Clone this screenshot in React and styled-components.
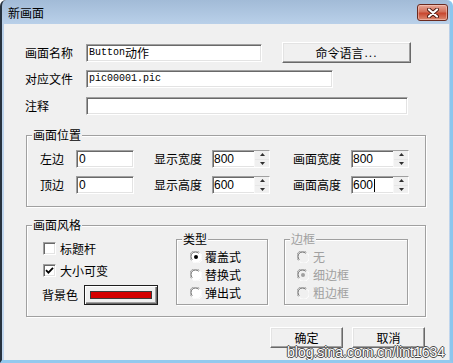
import React from "react";
import styled, { createGlobalStyle } from "styled-components";

const GlobalStyle = createGlobalStyle`
  html, body { margin: 0; padding: 0; background: #ffffff; }
  body { font-family: "Noto Sans CJK SC", "Liberation Sans", sans-serif; font-size: 12px; }
  * { box-sizing: border-box; }
`;

const Window = styled.div`
  position: relative;
  width: 453px;
  height: 363px;
  display: flex;
  flex-direction: column;
  background: linear-gradient(#a2bbd7, #b9d0e9 24px, #c2d7ee);
  border-left: 2px solid #27323e;
  border-right: 3px solid #8cc6ee;
  border-bottom: 3px solid #93c9ee;
  border-top-left-radius: 6px;
  border-top-right-radius: 6px;
  overflow: hidden;
`;

const TitleBar = styled.div`
  height: 24px;
  flex: none;
  display: flex;
  align-items: flex-start;
  justify-content: space-between;
  padding: 0 2px 0 6px;
`;

const Title = styled.div`
  margin-top: 6px;
  font-size: 12px;
  line-height: 14px;
  color: #000;
`;

const CloseButton = styled.div`
  margin-top: 4px;
  width: 31px;
  height: 17px;
  border: 1px solid #6b2a1f;
  border-radius: 3px;
  background: linear-gradient(#e8a898, #d2705a 45%, #c8472f 55%, #dc8b72);
  box-shadow: inset 0 0 0 1px rgba(255, 220, 210, 0.45);
  display: flex;
  align-items: center;
  justify-content: center;
`;

const Client = styled.div`
  flex: 1;
  margin: 0 1px 0 2px;
  background: #f0f0f0;
  padding: 0 23px 0 21px;
  display: flex;
  flex-direction: column;
  color: #000;
`;

const FormRow = styled.div`
  display: flex;
  align-items: center;
  height: ${(p) => p.$h}px;
  margin-top: ${(p) => p.$mt || 0}px;
`;

const FieldLabel = styled.div`
  flex: none;
  width: ${(p) => p.$w}px;
  margin-left: ${(p) => p.$ml || 0}px;
  font-size: 12px;
  line-height: 14px;
  white-space: nowrap;
  color: #000;
`;

const sunken = `
  background: #ffffff;
  border: 1px solid;
  border-color: #a0a0a0 #ffffff #ffffff #a0a0a0;
  box-shadow: inset 1px 1px 0 #696969, inset -1px -1px 0 #e3e3e3;
`;

const TextField = styled.div`
  ${sunken}
  flex: none;
  width: ${(p) => p.$w}px;
  height: 18px;
  padding: 0 2px;
  display: flex;
  align-items: center;
  font-family: ${(p) => (p.$mono ? `"Liberation Mono", "Noto Sans CJK SC", monospace` : `"Liberation Sans", sans-serif`)};
  font-size: ${(p) => (p.$mono ? 10 : 12)}px;
  white-space: nowrap;
  overflow: hidden;
`;

const Cjk = styled.span`
  font-family: "Noto Sans CJK SC", sans-serif;
  font-size: 12px;
`;

const Button = styled.div`
  flex: none;
  width: ${(p) => p.$w}px;
  height: 21px;
  margin-left: ${(p) => p.$ml || 0}px;
  background: #f0f0f0;
  border: 1px solid;
  border-color: #ffffff #696969 #696969 #ffffff;
  box-shadow: inset -1px -1px 0 #a0a0a0, inset 1px 1px 0 #e3e3e3;
  display: flex;
  align-items: center;
  justify-content: center;
  font-size: 12px;
  line-height: 14px;
  color: #000;
`;

const Dots = styled.span`
  font-family: "Liberation Sans", sans-serif;
  letter-spacing: 1px;
  margin-left: 1px;
`;

const Group = styled.fieldset`
  flex: none;
  margin: ${(p) => p.$mt || 0}px 0 0 ${(p) => p.$ml || 0}px;
  padding: 0;
  width: ${(p) => (p.$w ? `${p.$w}px` : "auto")};
  min-width: 0;
  border: 1px solid #a0a0a0;
  box-shadow: 1px 1px 0 #ffffff, inset 1px 1px 0 #ffffff;
`;

const Legend = styled.legend`
  margin-left: 5px;
  padding: 0 1px;
  background: #f0f0f0;
  font-size: 12px;
  line-height: 14px;
  color: ${(p) => (p.$disabled ? "#a0a0a0" : "#000")};
`;

const PositionBody = styled.div`
  display: flex;
  flex-direction: column;
  gap: 8px;
  padding: 8px 0 12px 13px;
`;

const SpinBox = styled.div`
  ${sunken}
  flex: none;
  width: 58px;
  height: 18px;
  display: flex;
  align-items: stretch;
`;

const SpinText = styled.div`
  flex: 1;
  display: flex;
  align-items: center;
  padding-left: 1px;
  font-family: "Liberation Sans", sans-serif;
  font-size: 12px;
`;

const Caret = styled.span`
  display: inline-block;
  width: 1px;
  height: 13px;
  background: #000;
  margin-left: 1px;
`;

const SpinButtons = styled.div`
  flex: none;
  width: 15px;
  display: flex;
  flex-direction: column;
  background: #f0f0f0;
  border-left: 1px solid #f7f7f7;
`;

const SpinHalf = styled.div`
  flex: 1;
  display: flex;
  align-items: center;
  justify-content: center;
  border-bottom: ${(p) => (p.$top ? "1px solid #e6e6e6" : "none")};
`;

const StyleBody = styled.div`
  display: flex;
  padding: 0 0 11px 0;
`;

const LeftColumn = styled.div`
  flex: none;
  width: 149px;
  padding: 10px 0 0 15px;
  display: flex;
  flex-direction: column;
`;

const CheckRow = styled.div`
  display: flex;
  align-items: center;
  height: 13px;
  margin-top: ${(p) => p.$mt || 0}px;
  padding-left: 1px;
  gap: 4px;
  font-size: 12px;
  line-height: 14px;
`;

const CheckBox = styled.div`
  ${sunken}
  flex: none;
  width: 13px;
  height: 13px;
  display: flex;
  align-items: center;
  justify-content: center;
`;

const ColorRow = styled.div`
  display: flex;
  align-items: center;
  height: 20px;
  margin-top: 8px;
`;

const ColorButton = styled.div`
  flex: none;
  width: 74px;
  height: 20px;
  margin-left: 6px;
  background: #f0f0f0;
  border: 1px solid #1e1e1e;
  box-shadow: inset 1px 1px 0 #ffffff, inset -1px -1px 0 #696969, inset -2px -2px 0 #a0a0a0;
  display: flex;
  align-items: center;
  justify-content: center;
  padding-bottom: 1px;
`;

const Swatch = styled.div`
  width: 62px;
  height: 8px;
  background: ${(p) => p.$color};
  border: 1px solid #3a3a3a;
`;

const RadioList = styled.div`
  display: flex;
  flex-direction: column;
  gap: 2px;
  padding: 3px 0 3px ${(p) => p.$pl}px;
`;

const RadioRow = styled.div`
  display: flex;
  align-items: center;
  height: 16px;
  gap: ${(p) => p.$gap}px;
  font-size: 12px;
  line-height: 14px;
  color: ${(p) => (p.$disabled ? "#a0a0a0" : "#000")};
`;

const Footer = styled.div`
  display: flex;
  justify-content: flex-end;
  gap: 9px;
  margin-top: 10px;
  padding-right: 1px;
`;

const Watermark = styled.div`
  position: absolute;
  left: 285px;
  top: 344px;
  font-family: "Liberation Sans", Arial, sans-serif;
  font-size: 14px;
  line-height: 16px;
  color: #ffffff;
  white-space: nowrap;
  text-shadow: 1px 0 0 #4a4a4a, -1px 0 0 #4a4a4a, 0 1px 0 #4a4a4a, 0 -1px 0 #4a4a4a;
`;

function CloseIcon() {
  return (
    <svg width="12" height="10" viewBox="0 0 12 10">
      <path d="M2 1.5 L10 8.5 M10 1.5 L2 8.5" stroke="#4a1810" strokeWidth="4" strokeLinecap="round" />
      <path d="M2 1.5 L10 8.5 M10 1.5 L2 8.5" stroke="#ffffff" strokeWidth="2.2" strokeLinecap="round" />
    </svg>
  );
}

function Arrow({ up }) {
  return (
    <svg width="5" height="3" viewBox="0 0 5 3">
      <path d={up ? "M0 3 L2.5 0 L5 3 Z" : "M0 0 L2.5 3 L5 0 Z"} fill="#303030" />
    </svg>
  );
}

function Spin({ value, caret }) {
  return (
    <SpinBox>
      <SpinText>
        {value}
        {caret && <Caret />}
      </SpinText>
      <SpinButtons>
        <SpinHalf $top>
          <Arrow up />
        </SpinHalf>
        <SpinHalf>
          <Arrow />
        </SpinHalf>
      </SpinButtons>
    </SpinBox>
  );
}

function Check({ checked, label, mt }) {
  return (
    <CheckRow $mt={mt}>
      <CheckBox>
        {checked && (
          <svg width="9" height="9" viewBox="0 0 9 9">
            <path d="M1 4.2 L3.4 6.6 L8 1.8" stroke="#000" strokeWidth="1.8" fill="none" />
          </svg>
        )}
      </CheckBox>
      {label}
    </CheckRow>
  );
}

function RadioIcon({ checked, disabled }) {
  const fill = disabled ? "#f0f0f0" : "#ffffff";
  return (
    <svg width="12" height="12" viewBox="0 0 12 12">
      <circle cx="6" cy="6" r="5.5" fill={fill} />
      <path d="M1.4 9.4 A5.5 5.5 0 0 1 9.4 1.4" stroke="#a0a0a0" strokeWidth="1" fill="none" />
      <path d="M2.3 8.6 A4.4 4.4 0 0 1 8.6 2.3" stroke="#696969" strokeWidth="1" fill="none" />
      <path d="M10.6 2.6 A5.5 5.5 0 0 1 2.6 10.6" stroke="#ffffff" strokeWidth="1" fill="none" />
      {checked && <circle cx="6" cy="6" r="2" fill={disabled ? "#a0a0a0" : "#000"} />}
    </svg>
  );
}

function Radio({ checked, disabled, label, gap }) {
  return (
    <RadioRow $disabled={disabled} $gap={gap}>
      <RadioIcon checked={checked} disabled={disabled} />
      {label}
    </RadioRow>
  );
}

export default function App() {
  return (
    <>
      <GlobalStyle />
      <Window>
        <TitleBar>
          <Title>新画面</Title>
          <CloseButton>
            <CloseIcon />
          </CloseButton>
        </TitleBar>
        <Client>
          <FormRow $h={21} $mt={18}>
            <FieldLabel $w={61}>画面名称</FieldLabel>
            <TextField $w={176} $mono>
              Button<Cjk>动作</Cjk>
            </TextField>
            <Button $w={129} $ml={20}>
              命令语言<Dots>...</Dots>
            </Button>
          </FormRow>
          <FormRow $h={19} $mt={6}>
            <FieldLabel $w={61}>对应文件</FieldLabel>
            <TextField $w={247} $mono>pic00001.pic</TextField>
          </FormRow>
          <FormRow $h={19} $mt={8}>
            <FieldLabel $w={61}>注释</FieldLabel>
            <TextField $w={322} $mono />
          </FormRow>

          <Group $mt={13} $ml={1}>
            <Legend>画面位置</Legend>
            <PositionBody>
              <FormRow $h={18}>
                <FieldLabel $w={36}>左边</FieldLabel>
                <TextField $w={58}>0</TextField>
                <FieldLabel $w={58} $ml={20}>显示宽度</FieldLabel>
                <Spin value="800" />
                <FieldLabel $w={58} $ml={23}>画面宽度</FieldLabel>
                <Spin value="800" />
              </FormRow>
              <FormRow $h={18}>
                <FieldLabel $w={36}>顶边</FieldLabel>
                <TextField $w={58}>0</TextField>
                <FieldLabel $w={58} $ml={20}>显示高度</FieldLabel>
                <Spin value="600" />
                <FieldLabel $w={58} $ml={23}>画面高度</FieldLabel>
                <Spin value="600" caret />
              </FormRow>
            </PositionBody>
          </Group>

          <Group $mt={11} $ml={1}>
            <Legend>画面风格</Legend>
            <StyleBody>
              <LeftColumn>
                <Check label="标题杆" />
                <Check label="大小可变" checked mt={9} />
                <ColorRow>
                  <FieldLabel $w={36}>背景色</FieldLabel>
                  <ColorButton>
                    <Swatch $color="#d40000" />
                  </ColorButton>
                </ColorRow>
              </LeftColumn>
              <Group $w={92}>
                <Legend>类型</Legend>
                <RadioList $pl={13}>
                  <Radio checked label="覆盖式" gap={3} />
                  <Radio label="替换式" gap={3} />
                  <Radio label="弹出式" gap={3} />
                </RadioList>
              </Group>
              <Group $w={124} $ml={16}>
                <Legend $disabled>边框</Legend>
                <RadioList $pl={12}>
                  <Radio disabled label="无" gap={4} />
                  <Radio disabled checked label="细边框" gap={4} />
                  <Radio disabled label="粗边框" gap={4} />
                </RadioList>
              </Group>
            </StyleBody>
          </Group>

          <Footer>
            <Button $w={73}>确定</Button>
            <Button $w={73}>取消</Button>
          </Footer>
        </Client>
        <Watermark>blog.sina.com.cn/lint1634</Watermark>
      </Window>
    </>
  );
}
